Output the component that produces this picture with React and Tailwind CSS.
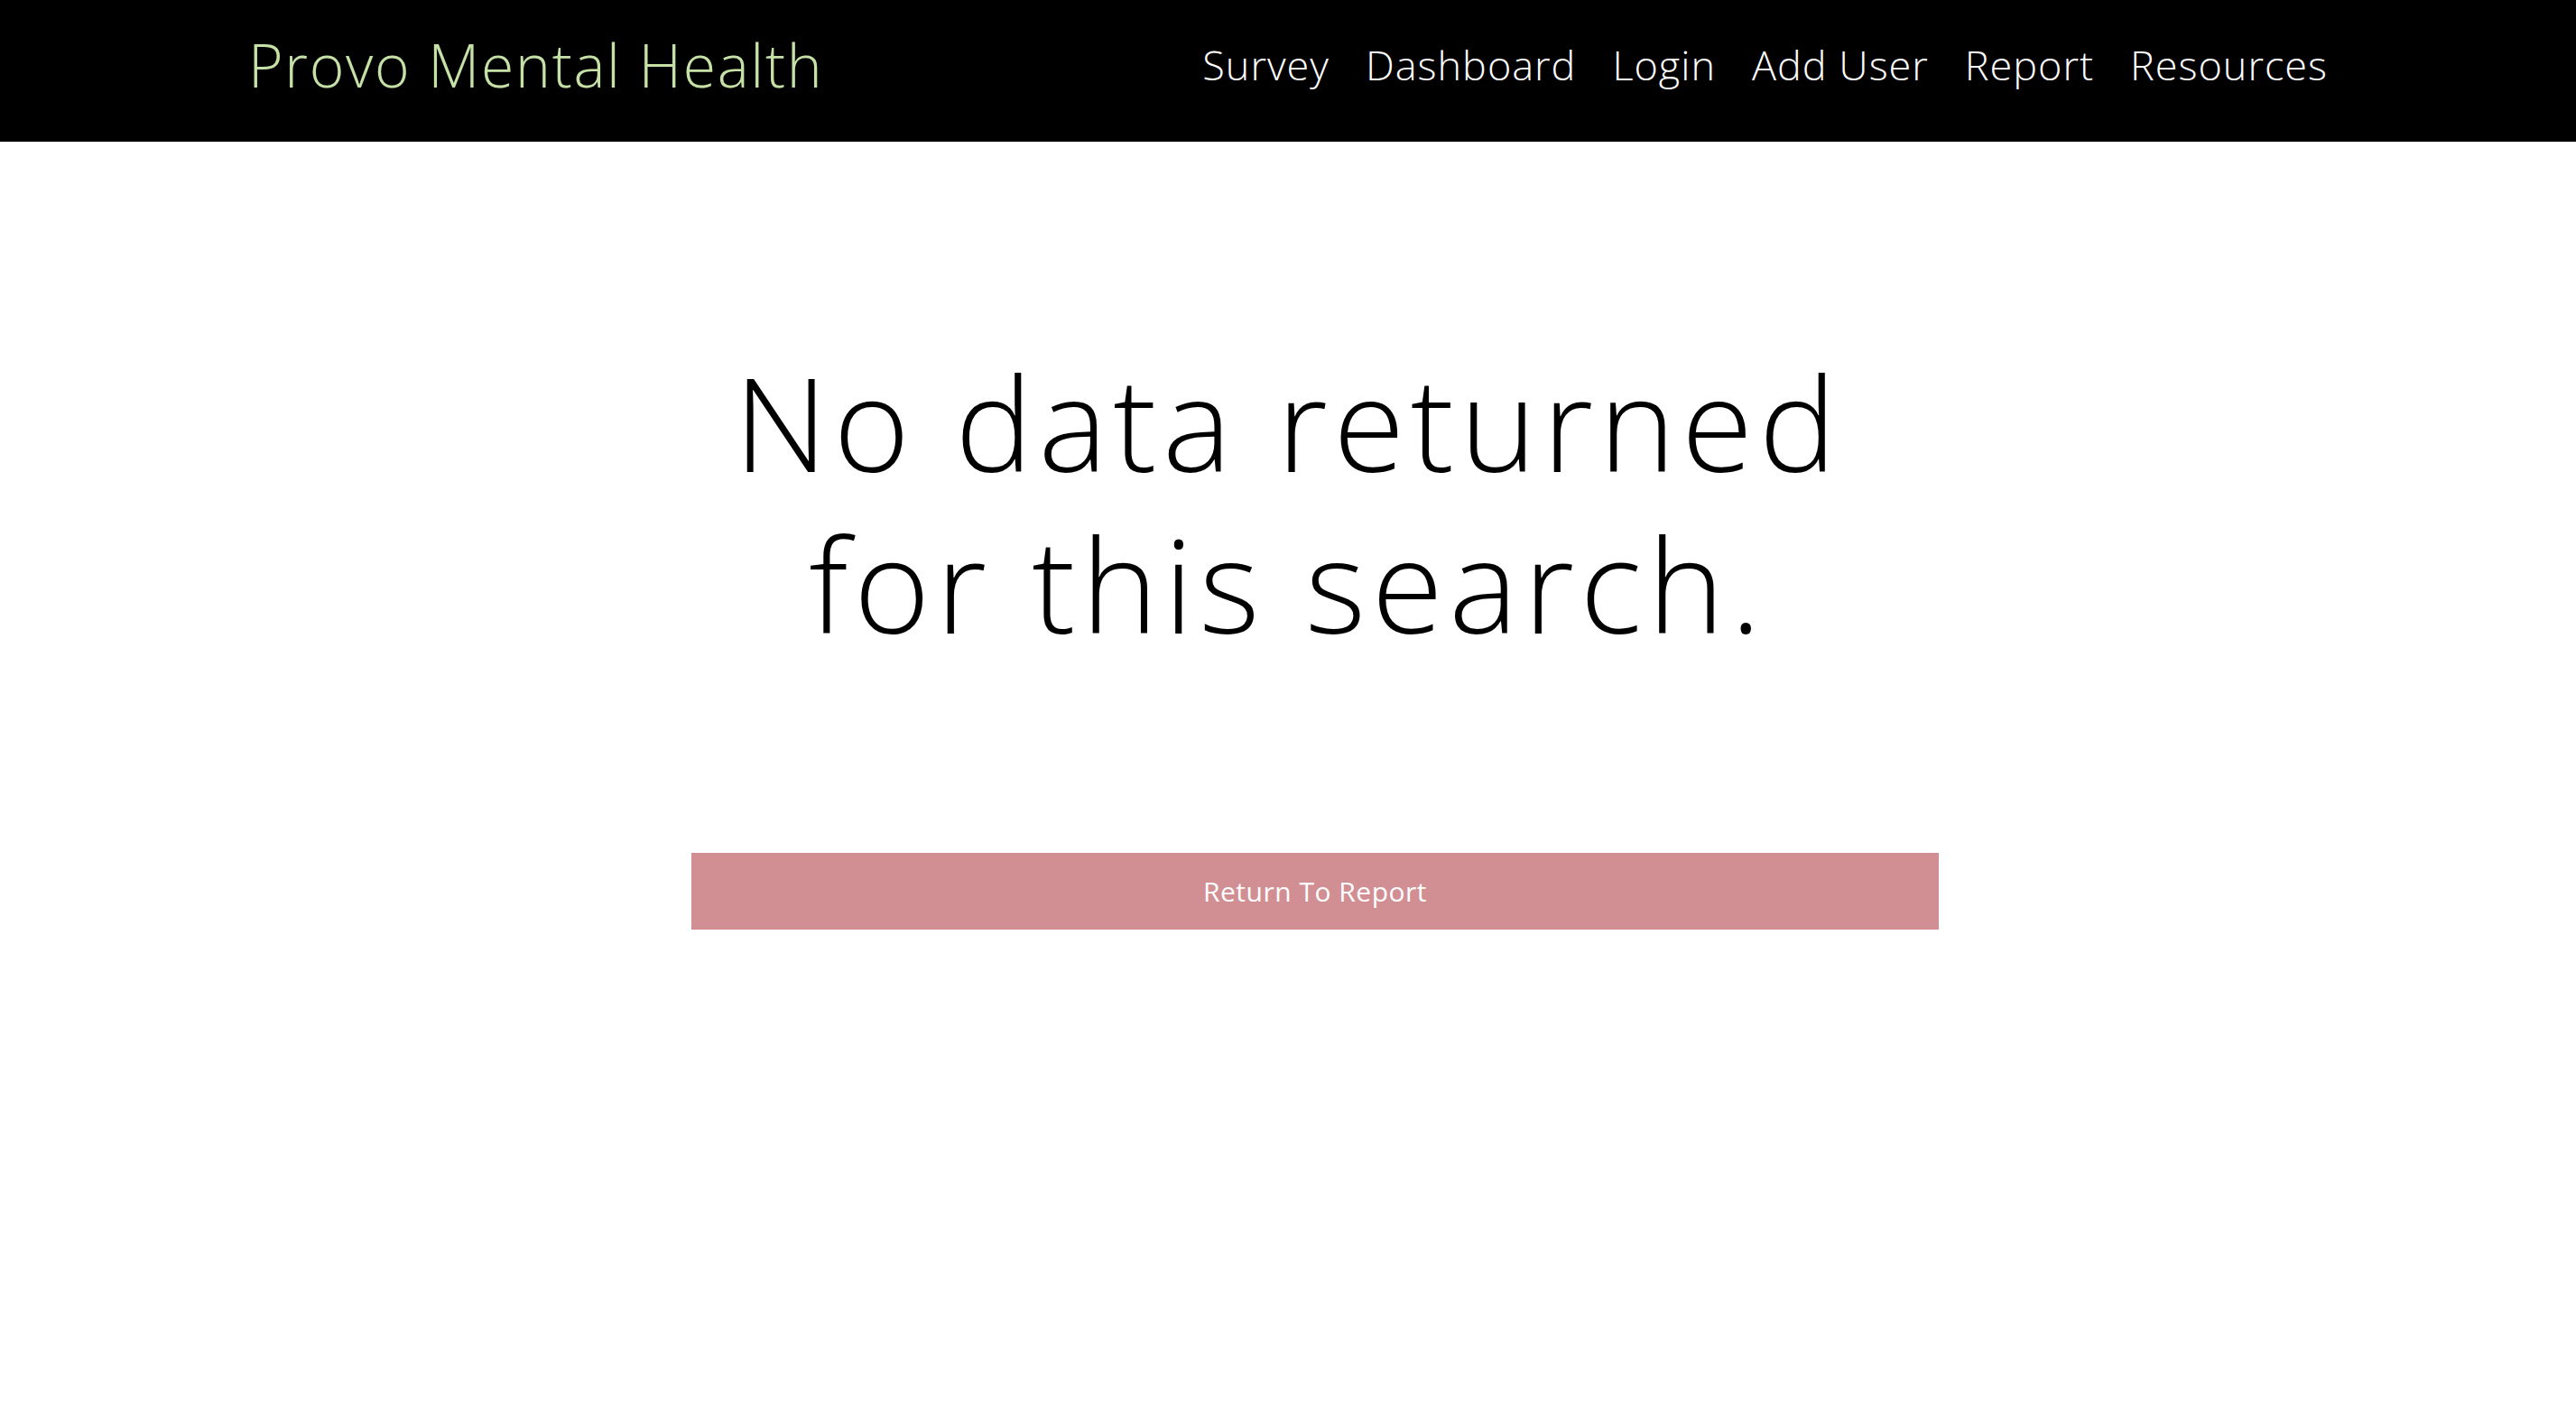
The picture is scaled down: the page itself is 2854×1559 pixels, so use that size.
const navLinks = ['Survey', 'Dashboard', 'Login', 'Add User', 'Report', 'Resources'];

export default function App() {
  return (
    <div className="min-h-screen bg-white font-['Open_Sans',sans-serif]">
      <header className="h-[157px] bg-black">
        <div className="mx-auto flex h-full w-[2304px] items-center justify-between">
          <a href="#" className="pb-[16px] text-[66px] font-light leading-none tracking-[1.7px] text-[#c5e1a5]">
            Provo Mental Health
          </a>
          <nav className="flex items-center gap-[40px] pb-[14px]">
            {navLinks.map((link) => (
              <a key={link} href="#" className="text-[45px] font-light leading-none tracking-[1px] text-white">
                {link}
              </a>
            ))}
          </nav>
        </div>
      </header>

      <main className="pt-[221px]">
        <h1 className="text-center text-[144px] font-light leading-[179px] tracking-[6.5px] text-black">
          No data returned
          <br />
          for this search.
        </h1>

        <div className="mx-auto mt-[209px] w-[1442px] pl-[60px]">
          <button className="flex h-[85px] w-full items-center justify-center bg-[#d18f93] text-[30px] tracking-[0.5px] text-white">
            Return To Report
          </button>
        </div>
      </main>
    </div>
  );
}
